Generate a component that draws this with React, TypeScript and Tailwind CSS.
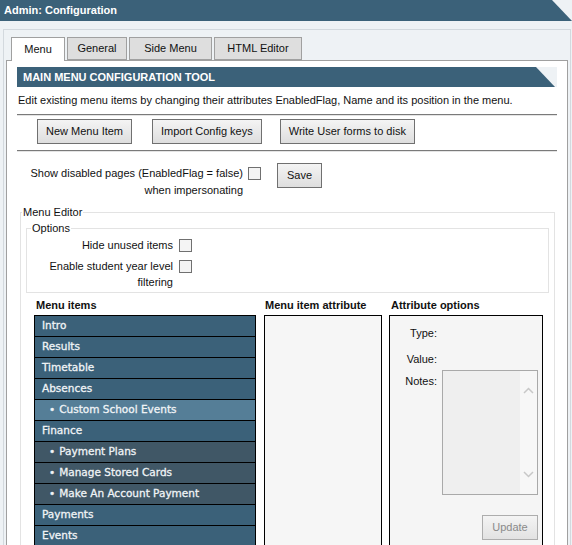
import React from 'react';

type Item = { label: string; child?: boolean; tone?: 'active' | 'dim' };

const MENU: Item[] = [
  { label: 'Intro' },
  { label: 'Results' },
  { label: 'Timetable' },
  { label: 'Absences' },
  { label: 'Custom School Events', child: true, tone: 'active' },
  { label: 'Finance' },
  { label: 'Payment Plans', child: true, tone: 'dim' },
  { label: 'Manage Stored Cards', child: true, tone: 'dim' },
  { label: 'Make An Account Payment', child: true, tone: 'dim' },
  { label: 'Payments' },
  { label: 'Events' },
];

const TONE = {
  active: 'bg-[#557e97]',
  dim: 'bg-[#405766]',
  base: 'bg-[#3b6179]',
};

function Btn({ children, className = '' }: { children: React.ReactNode; className?: string }) {
  return (
    <button
      className={`h-[25px] whitespace-nowrap border border-[#707070] bg-gradient-to-b from-[#f4f4f4] to-[#dedede] px-[8px] text-[11px] text-[#111] ${className}`}
    >
      {children}
    </button>
  );
}

function Box() {
  return <span className="block h-[13px] w-[13px] border border-[#707070] bg-[#f4f4f4]" />;
}

function Tab({ label, active, w }: { label: string; active?: boolean; w: string }) {
  return (
    <div
      className={`flex h-[23px] items-center justify-center border border-[#a0a0a0] text-[11px] ${w} ${
        active ? 'relative z-10 h-[24px] border-b-0 bg-white' : 'bg-[#dedede]'
      }`}
    >
      {label}
    </div>
  );
}

function Rule() {
  return <div className="h-[2px] border-t border-[#7a7a7a] bg-[#e4e4e4]" />;
}

export default function App() {
  return (
    <div className="h-[545px] w-[572px] overflow-hidden bg-[#eef2f5] font-['Liberation_Sans',Arial,sans-serif] text-[11px] text-[#111]">
      <div className="flex h-[21px]">
        <div className="flex flex-1 items-center bg-[#3b6179] pl-[4px] text-[11px] font-bold text-white">
          Admin: Configuration
        </div>
        <svg width="20" height="21" viewBox="0 0 20 21" className="block">
          <polygon points="0,0 20,21 0,21" fill="#3b6179" />
        </svg>
      </div>

      <div className="ml-[3px] mr-[1px] mt-[8px] border border-[#d3d9de] px-[2px] pt-[7px]">
        <div className="ml-[5px] flex gap-[2px]">
          <Tab label="Menu" active w="w-[54px]" />
          <Tab label="General" w="w-[60px]" />
          <Tab label="Side Menu" w="w-[83px]" />
          <Tab label="HTML Editor" w="w-[88px]" />
        </div>

        <div className="-mt-px h-[500px] border border-[#a0a0a0] bg-white px-[10px] pt-[6px]">
          <div className="flex h-[20px] bg-[#eef2f5] pr-[2px]">
            <div className="flex flex-1 items-center bg-[#3b6179] pl-[6px] text-[11px] font-bold text-white">
              MAIN MENU CONFIGURATION TOOL
            </div>
            <svg width="19" height="20" viewBox="0 0 19 20" className="block">
              <polygon points="0,0 19,20 0,20" fill="#3b6179" />
            </svg>
          </div>

          <p className="mt-[6px] pl-px leading-[14px]">
            Edit existing menu items by changing their attributes EnabledFlag, Name and its position in the menu.
          </p>

          <div className="mt-[7px]">
            <Rule />
          </div>
          <div className="flex pl-[20px] pt-[3px]">
            <Btn>New Menu Item</Btn>
            <Btn className="ml-[20px]">Import Config keys</Btn>
            <Btn className="ml-[18px]">Write User forms to disk</Btn>
          </div>
          <div className="mt-[6px]">
            <Rule />
          </div>

          <div className="mt-[11px] flex items-start">
            <div className="ml-[11px] mt-[2px] w-[215px] whitespace-nowrap text-right leading-[17px]">
              Show disabled pages (EnabledFlag = false)
              <br />
              when impersonating
            </div>
            <div className="ml-[5px] mt-[4px]">
              <Box />
            </div>
            <Btn className="ml-[16px] w-[45px] px-0">Save</Btn>
          </div>

          <fieldset className="mb-0 ml-[3px] mr-[2px] mt-[7px] h-[400px] border border-[#e3e3e3] px-[5px] pt-[3px]">
            <legend className="-ml-[4px] px-px leading-[13px]">Menu Editor</legend>

            <fieldset className="border border-[#e3e3e3] px-[5px] pb-[2px]">
              <legend className="-ml-[1px] px-px leading-[13px]">Options</legend>
              <div className="mt-[2px] flex items-center">
                <div className="w-[141px] text-right leading-[17px]">Hide unused items</div>
                <div className="ml-[6px]">
                  <Box />
                </div>
              </div>
              <div className="mt-[4px] flex items-start">
                <div className="w-[141px] text-right leading-[16px]">
                  Enable student year level
                  <br />
                  filtering
                </div>
                <div className="ml-[6px] mt-[2px]">
                  <Box />
                </div>
              </div>
            </fieldset>

            <div className="mt-[6px] flex pl-[8px]">
              <div className="w-[222px]">
                <div className="pl-[2px] font-bold leading-[13px]">Menu items</div>
                <ul className="mt-[3px] border-x border-b border-black">
                  {MENU.map((m) => (
                    <li
                      key={m.label}
                      className={`flex h-[21px] items-center border-t border-black font-['DejaVu_Sans',Verdana,sans-serif] text-[10.5px] text-[#f2f5f7] [-webkit-text-stroke:0.3px_#eef2f5] ${
                        TONE[m.tone ?? 'base']
                      } ${m.child ? 'pl-[14px]' : 'pl-[7px]'}`}
                    >
                      {m.child ? <span className="mr-[4px]">•</span> : null}
                      {m.label}
                    </li>
                  ))}
                </ul>
              </div>

              <div className="ml-[8px] w-[118px]">
                <div className="pl-px font-bold leading-[13px]">Menu item attribute</div>
                <div className="mt-[3px] h-[260px] border border-black bg-[#f6f6f6]" />
              </div>

              <div className="ml-[7px] w-[154px]">
                <div className="pl-[2px] font-bold leading-[13px]">Attribute options</div>
                <div className="mt-[3px] h-[260px] border border-black bg-[#f5f5f5] pr-[4px] pt-[10px]">
                  <div className="w-[47px] text-right leading-[14px]">Type:</div>
                  <div className="mt-[12px] w-[47px] text-right leading-[14px]">Value:</div>
                  <div className="mt-[8px] flex items-start">
                    <div className="w-[47px] text-right leading-[14px]">Notes:</div>
                    <div className="ml-[5px] mt-[-4px] flex h-[125px] flex-1 border border-[#a9a9a9] bg-[#efefef]">
                      <div className="flex-1" />
                      <div className="flex w-[17px] flex-col items-center justify-between bg-[#f7f7f7] py-[16px]">
                        <svg width="11" height="7" viewBox="0 0 11 7">
                          <path d="M1 6 L5.5 1.5 L10 6" fill="none" stroke="#c8c8c8" strokeWidth="1.5" />
                        </svg>
                        <svg width="11" height="7" viewBox="0 0 11 7">
                          <path d="M1 1 L5.5 5.5 L10 1" fill="none" stroke="#c8c8c8" strokeWidth="1.5" />
                        </svg>
                      </div>
                    </div>
                  </div>
                  <div className="mt-[20px] flex justify-end">
                    <button className="h-[25px] w-[56px] border border-[#adadad] bg-gradient-to-b from-[#f4f4f4] to-[#e2e2e2] text-[11px] text-[#8a8a8a]">
                      Update
                    </button>
                  </div>
                </div>
              </div>
            </div>
          </fieldset>
        </div>
      </div>
    </div>
  );
}
